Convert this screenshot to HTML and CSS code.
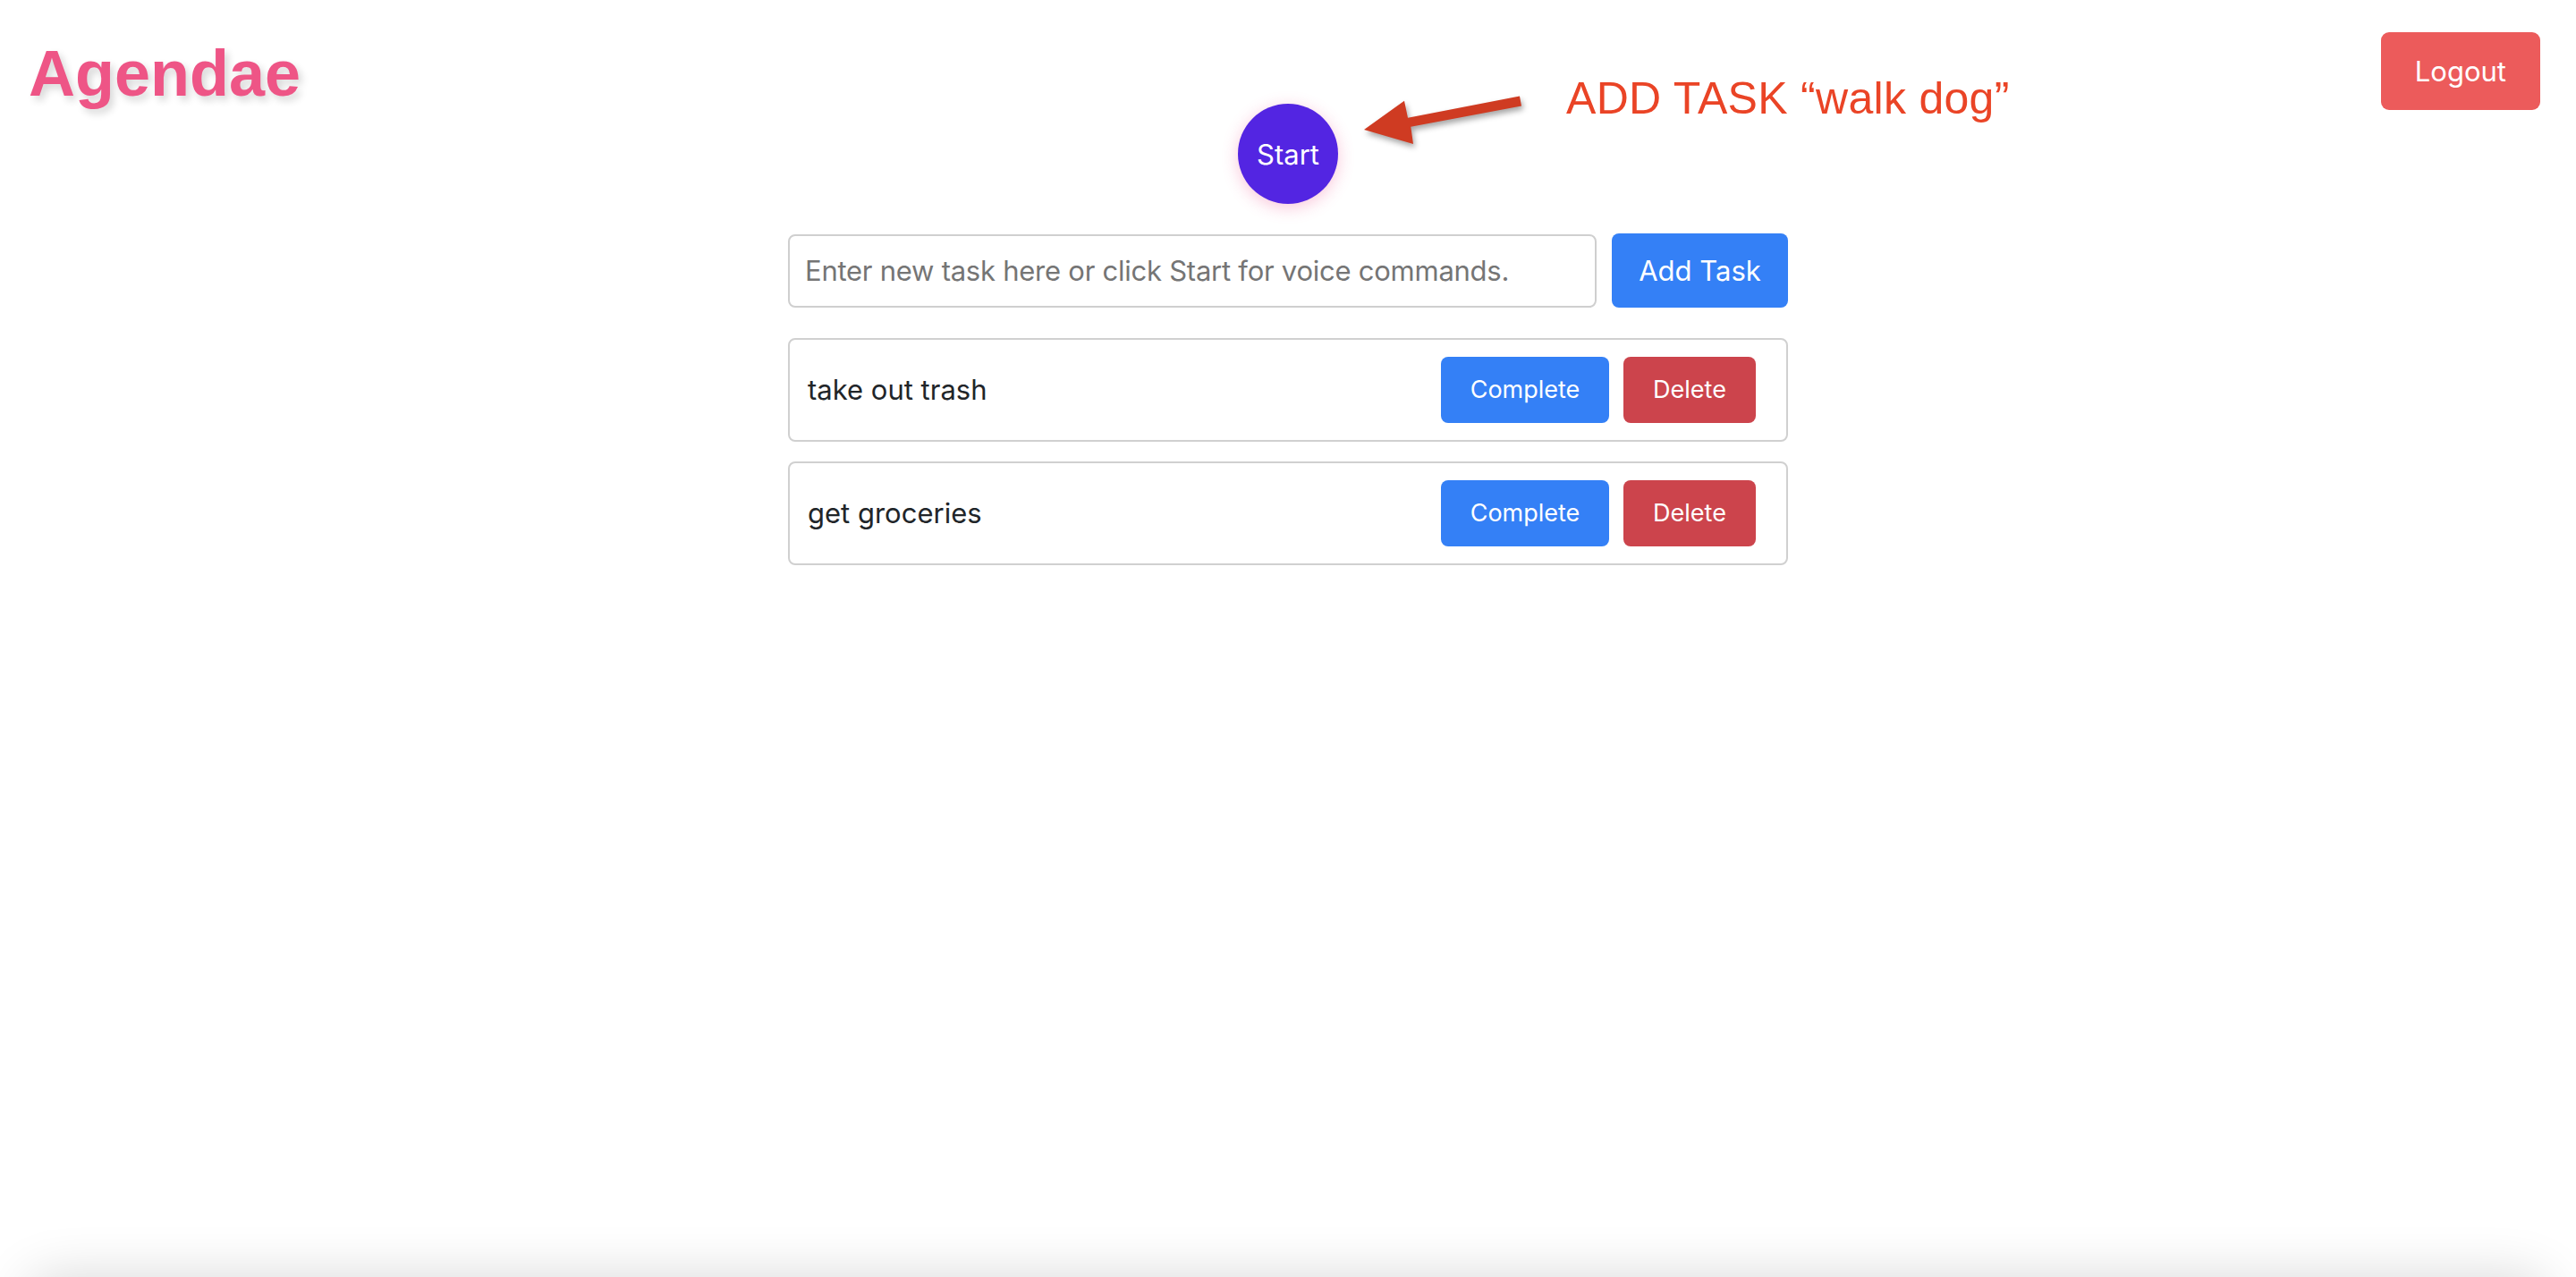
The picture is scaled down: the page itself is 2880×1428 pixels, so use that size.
FILE: index.html
```html
<!DOCTYPE html>
<html lang="en">
<head>
<meta charset="utf-8">
<title>Agendae</title>
<link rel="stylesheet" href="styles.css">
</head>
<body>
<header class="topbar">
  <h1 class="logo">Agendae</h1>
  <div class="center-col">
    <button class="start-btn" type="button">Start</button>
  </div>
  <div class="right-col">
    <button class="logout-btn" type="button">Logout</button>
  </div>
</header>

<svg class="arrow" width="200" height="80" viewBox="0 0 200 80" aria-hidden="true">
  <polygon points="15,50 60,17.7 64,36.7 189,12.6 191,23.4 67.3,46.7 70,66" fill="#cf3b22"/>
</svg>
<span class="annotation-text">ADD TASK “walk dog”</span>

<main class="container">
  <form class="task-form" onsubmit="return false;">
    <input class="task-input" type="text" placeholder="Enter new task here or click Start for voice commands.">
    <button class="btn btn-add" type="submit">Add Task</button>
  </form>
  <ul class="task-list">
    <li class="task">
      <span class="task-text">take out trash</span>
      <div class="task-actions">
        <button class="btn btn-complete" type="button">Complete</button>
        <button class="btn btn-delete" type="button">Delete</button>
      </div>
    </li>
    <li class="task">
      <span class="task-text">get groceries</span>
      <div class="task-actions">
        <button class="btn btn-complete" type="button">Complete</button>
        <button class="btn btn-delete" type="button">Delete</button>
      </div>
    </li>
  </ul>
</main>
</body>
</html>
```

FILE: styles.css
```css
html, body {
  margin: 0;
  padding: 0;
  background: #ffffff;
}

body {
  min-height: 1428px;
  font-family: Inter, "Liberation Sans", Arial, sans-serif;
  color: #212529;
  position: relative;
  overflow: hidden;
}

body::after {
  content: "";
  position: fixed;
  left: 30px;
  right: 30px;
  bottom: -60px;
  height: 60px;
  border-radius: 40px;
  background: #e6e6e6;
  box-shadow: 0 0 60px rgba(0, 0, 0, 0.16);
  pointer-events: none;
}

.topbar {
  display: grid;
  grid-template-columns: 1fr 112px 1fr;
  align-items: start;
  padding: 36px 32px 0;
}

.logo {
  margin: 10px 0 0 0;
  font-family: "Liberation Sans", Arial, Helvetica, sans-serif;
  font-weight: 700;
  font-size: 72px;
  line-height: 72px;
  color: #ee5586;
  text-shadow: 4px 5px 8px rgba(0, 0, 0, 0.16);
}

.center-col {
  padding-top: 80px;
  display: flex;
  justify-content: center;
}

.start-btn {
  width: 112px;
  height: 112px;
  border-radius: 50%;
  border: none;
  background: #5325e2;
  color: #ffffff;
  font-family: Inter, "Liberation Sans", Arial, sans-serif;
  font-size: 31px;
  padding: 0;
  box-shadow: 0 4px 18px rgba(240, 80, 140, 0.32);
  cursor: pointer;
}

.right-col {
  display: flex;
  justify-content: flex-end;
}

.logout-btn {
  margin-right: 8px;
  border: none;
  border-radius: 9px;
  background: #ec5b5b;
  color: #ffffff;
  font-family: Inter, "Liberation Sans", Arial, sans-serif;
  font-size: 31px;
  line-height: 47px;
  padding: 20px 38px;
  cursor: pointer;
}

.arrow {
  position: absolute;
  left: 1510px;
  top: 95px;
  filter: drop-shadow(2px 4px 3px rgba(0, 0, 0, 0.35));
}

.annotation-text {
  position: absolute;
  left: 1751px;
  top: 85px;
  font-family: "Liberation Sans", Arial, Helvetica, sans-serif;
  font-size: 50px;
  line-height: 50px;
  letter-spacing: 0.3px;
  color: #ea4426;
  white-space: nowrap;
}

.container {
  width: 1118px;
  margin: 33px auto 0;
}

.task-form {
  display: flex;
  align-items: center;
  gap: 17px;
  margin: 0;
}

.task-input {
  flex: 1;
  box-sizing: border-box;
  height: 82px;
  border: 2px solid #cfcfcf;
  border-radius: 8px;
  padding: 0 17px;
  font-family: Inter, "Liberation Sans", Arial, sans-serif;
  font-size: 31px;
  letter-spacing: -0.25px;
  color: #212529;
  outline: none;
}

.task-input::placeholder {
  color: #757575;
}

.btn {
  border: none;
  border-radius: 8px;
  color: #ffffff;
  font-family: Inter, "Liberation Sans", Arial, sans-serif;
  cursor: pointer;
}

.btn-add {
  box-sizing: border-box;
  width: 197px;
  height: 83px;
  background: #3480f6;
  font-size: 31px;
  padding: 0;
}

.task-list {
  list-style: none;
  margin: 34px 0 0;
  padding: 0;
  display: flex;
  flex-direction: column;
  gap: 22px;
}

.task {
  display: flex;
  align-items: center;
  border: 2px solid #d0d0d0;
  border-radius: 8px;
  padding: 19px 34px 19px 20px;
}

.task-text {
  flex: 1;
  font-size: 31px;
  line-height: 48px;
  color: #212529;
}

.task-actions {
  display: flex;
  gap: 16px;
}

.btn-complete,
.btn-delete {
  box-sizing: border-box;
  height: 74px;
  font-size: 27px;
  line-height: 42px;
  padding: 0;
}

.btn-complete {
  width: 188px;
  background: #3480f6;
}

.btn-delete {
  width: 148px;
  background: #cc444c;
}
```
